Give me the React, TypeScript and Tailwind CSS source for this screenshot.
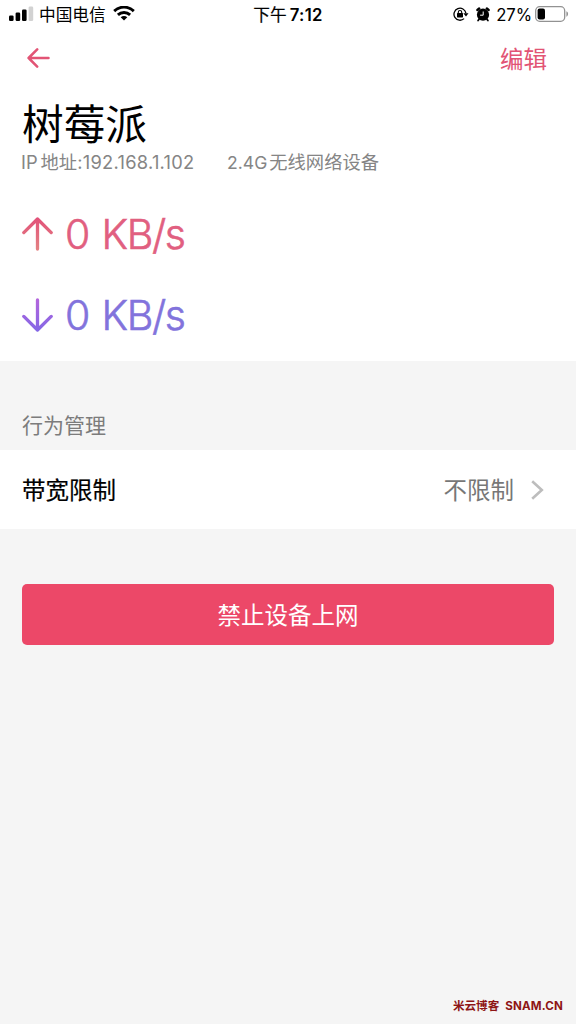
import type { ReactNode } from 'react';

const SignalIcon = () => (
  <svg width="25" height="16" viewBox="0 0 25 16">
    <rect x="0" y="9.5" width="4.6" height="5.5" rx="1.3" fill="#000" />
    <rect x="6.6" y="6.5" width="4.6" height="8.5" rx="1.3" fill="#000" />
    <rect x="13" y="3.5" width="4.6" height="11.5" rx="1.3" fill="#000" />
    <rect x="19.6" y=".5" width="4.6" height="14.5" rx="1.3" fill="#d2d2d2" />
  </svg>
);

const WifiIcon = () => (
  <svg width="22" height="16" viewBox="0 0 22 16" fill="none" stroke="#000" strokeWidth="2.9">
    <path d="M1.2 5.1C6.8 -.2 15.2 -.2 20.8 5.1" />
    <path d="M4.9 8.9C8.4 5.6 13.6 5.6 17.1 8.9" />
    <path d="M11 14.4 7.7 11.2C9.6 9.6 12.4 9.6 14.3 11.2Z" fill="#000" stroke="none" />
  </svg>
);

const RotationLockIcon = () => (
  <svg width="16" height="14" viewBox="0 0 16 14" fill="none" stroke="#000">
    <path d="M11.1 11.6A6 6 0 1 1 12.9 6.2" strokeWidth="1.3" />
    <path d="M10.3 6.2h5.2l-2.5 3.3z" fill="#000" stroke="none" />
    <rect x="4" y="6.1" width="6" height="4.3" rx=".6" fill="#000" stroke="none" />
    <path d="M5.3 6.4V5.2a1.7 1.7 0 0 1 3.4 0v1.2" strokeWidth="1.1" />
  </svg>
);

const AlarmIcon = () => (
  <svg width="14" height="15" viewBox="0 0 14 15" fill="none" stroke="#000">
    <circle cx="7" cy="7.7" r="6.1" fill="#000" stroke="none" />
    <path d="M1.4 3 3.2 1.5M12.6 3 10.8 1.5" strokeWidth="2.4" strokeLinecap="round" />
    <path d="m3.4 11.8-1.3 1.7M10.6 11.8l1.3 1.7" strokeWidth="1.8" strokeLinecap="round" />
    <path d="M7.2 4.5v3.7H4.1" stroke="#fff" strokeWidth="1" />
  </svg>
);

const BatteryIcon = () => (
  <svg width="34" height="16" viewBox="0 0 34 16">
    <rect x=".7" y=".7" width="29" height="14.6" rx="4" fill="none" stroke="#929292" strokeWidth="1.3" />
    <rect x="2.6" y="2.6" width="7.4" height="10.8" rx="2" fill="#000" />
    <path d="M31.4 5.3c2.2.7 2.2 4.7 0 5.4z" fill="#929292" />
  </svg>
);

const BackIcon = () => (
  <svg width="23" height="20" viewBox="0 0 23 20" fill="none" stroke="#e25475" strokeWidth="2.5" strokeLinecap="round" strokeLinejoin="round">
    <path d="M21.5 10H1.6M10.2 1.4 1.6 10l8.6 8.6" />
  </svg>
);

const UploadIcon = () => (
  <svg width="31" height="34" viewBox="0 0 31 34" fill="none" stroke="url(#up)" strokeWidth="3.3" strokeLinecap="round" strokeLinejoin="round">
    <defs>
      <linearGradient id="up" gradientUnits="userSpaceOnUse" x1="0" y1="0" x2="0" y2="34">
        <stop stopColor="#e25079" />
        <stop offset="1" stopColor="#e38383" />
      </linearGradient>
    </defs>
    <path d="M15.5 32V2M1.8 15.6 15.5 2l13.7 13.6" />
  </svg>
);

const DownloadIcon = () => (
  <svg width="31" height="34" viewBox="0 0 31 34" fill="none" stroke="url(#down)" strokeWidth="3.3" strokeLinecap="round" strokeLinejoin="round">
    <defs>
      <linearGradient id="down" gradientUnits="userSpaceOnUse" x1="0" y1="0" x2="0" y2="34">
        <stop stopColor="#b565dc" />
        <stop offset="1" stopColor="#8267e6" />
      </linearGradient>
    </defs>
    <path d="M15.5 2v30M1.8 18.4 15.5 32l13.7-13.6" />
  </svg>
);

const ChevronIcon = () => (
  <svg width="13" height="20" viewBox="0 0 13 20" fill="none" stroke="#bdbdbd" strokeWidth="2.6">
    <path d="m1.2 1.2 9.6 8.8-9.6 8.8" />
  </svg>
);

const StatusBar = () => (
  <div className="grid h-[29px] grid-cols-3 items-center pl-[9px] pr-[7px] text-[16.7px] leading-none text-black">
    <div className="flex items-center">
      <SignalIcon />
      <span className="ml-[5px] pt-[2px]">中国电信</span>
      <span className="ml-[7px]"><WifiIcon /></span>
    </div>
    <div className="pr-[2px] pt-[2px] text-center">
      <span className="[-webkit-text-stroke:0.2px]">下午</span>
      <span className="ml-[3px] font-semibold tracking-[0.3px]">7:12</span>
    </div>
    <div className="flex items-center justify-end">
      <RotationLockIcon />
      <span className="ml-[7px]"><AlarmIcon /></span>
      <span className="ml-[6px] mr-[3px] pt-[2px] tracking-[-0.1px]">27%</span>
      <BatteryIcon />
    </div>
  </div>
);

const Speed = ({ icon, className, children }: { icon: ReactNode; className: string; children: ReactNode }) => (
  <div className={`flex h-[50px] items-center gap-[12px] text-[41px] font-light leading-none tracking-[-1.4px] [word-spacing:2.5px] [-webkit-text-stroke:0.6px] ${className}`}>
    {icon}
    <span>{children}</span>
  </div>
);

export default function App() {
  return (
    <div className="flex min-h-screen flex-col bg-[#f5f5f5] font-['Inter','Noto_Sans_CJK_SC',sans-serif] whitespace-nowrap">
      <header className="h-[361px] bg-white">
        <StatusBar />
        <nav className="flex h-[58px] items-center justify-between pl-[27px] pr-[29px]">
          <button><BackIcon /></button>
          <button className="pt-[3px] text-[23.5px] leading-none text-[#e25475]">编辑</button>
        </nav>
        <div className="px-[22px] pt-[13px]">
          <h1 className="text-[41.7px] leading-[50px] text-black">树莓派</h1>
          <div className="flex h-[24px] text-[18.3px] leading-[24px] text-[#858585]">
            <span className="-ml-px w-[206px]">
              IP<span className="ml-[3px]">地址</span>
              <span className="tracking-[0.28px]">:192.168.1.102</span>
            </span>
            <span>
              <span className="mr-[2px] text-[17.6px]">2.4G</span>无线网络设备
            </span>
          </div>
          <div className="mt-[35px] flex flex-col gap-[31px]">
            <Speed icon={<UploadIcon />} className="text-[#e15f80]">0 KB/s</Speed>
            <Speed icon={<DownloadIcon />} className="text-[#8273dc]">0 KB/s</Speed>
          </div>
        </div>
      </header>

      <h2 className="flex h-[89px] items-end px-[22px] pb-[10px] text-[21px] leading-[28px] text-[#7c7c7c]">行为管理</h2>

      <section className="flex h-[79px] items-center bg-white pl-[22px] pr-[32px] text-[23.5px] leading-none">
        <span className="pt-[2px] text-black [-webkit-text-stroke:0.2px]">带宽限制</span>
        <span className="ml-auto mr-[17px] pt-[2px] text-[#777]">不限制</span>
        <ChevronIcon />
      </section>

      <div className="px-[22px] pt-[55px]">
        <button className="h-[61px] w-full rounded-[5px] bg-[#ec4868] pt-[2px] text-[23.5px] leading-none text-white">
          禁止设备上网
        </button>
      </div>

      <footer className="mt-auto flex justify-end gap-[6px] pb-[11px] pr-[13px] text-[11.6px] font-bold leading-[14px] text-[#8e1515]">
        <span>米云博客</span>
        <span className="tracking-[0.15px]">SNAM.CN</span>
      </footer>
    </div>
  );
}
